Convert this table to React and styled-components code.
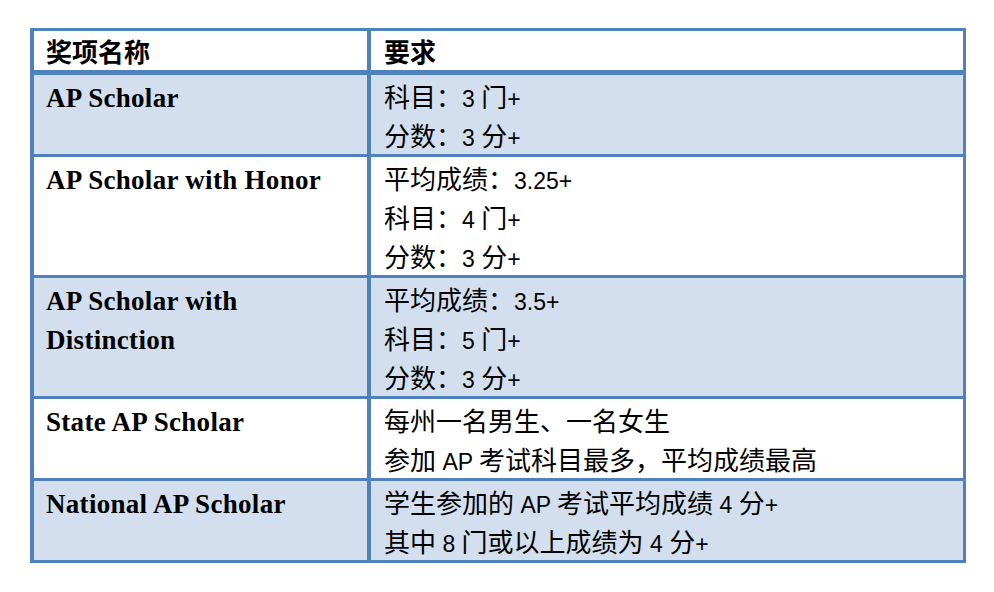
import React from 'react';
import styled, { createGlobalStyle } from 'styled-components';

const BORDER = '#4f81bd';
const SHADE = '#d3dfee';

const GlobalStyle = createGlobalStyle`
  html, body { margin: 0; padding: 0; background: #ffffff; }
  body { font-family: "Noto Sans CJK SC", sans-serif; color: #000; }
`;

const Page = styled.div`
  padding: 28px 0 0 30px;
`;

const Table = styled.table`
  width: 936px;
  table-layout: fixed;
  border-collapse: separate;
  border-spacing: 0;
  border-top: 3px solid ${BORDER};
  border-left: 4px solid ${BORDER};
`;

const Row = styled.tr`
  background: ${p => (p.$shaded ? SHADE : '#ffffff')};
`;

const HeadCell = styled.th`
  box-sizing: border-box;
  width: ${p => (p.$col === 0 ? 337 : 595)}px;
  padding: 0 12px 0 ${p => (p.$col === 0 ? 12 : 13)}px;
  border-right: ${p => (p.$col === 0 ? 4 : 3)}px solid ${BORDER};
  border-bottom: 5px solid ${BORDER};
  text-align: left;
  vertical-align: top;
  font-family: "Noto Sans CJK SC", sans-serif;
  font-size: 26px;
  font-weight: 700;
  line-height: 39px;
`;

const Cell = styled.td`
  box-sizing: border-box;
  padding: 1px 12px 0 ${p => (p.$col === 0 ? 12 : 13)}px;
  border-right: ${p => (p.$col === 0 ? 4 : 3)}px solid ${BORDER};
  border-bottom: 3px solid ${BORDER};
  vertical-align: top;
  line-height: 39px;
`;

const AwardName = styled.div`
  padding-top: 3px;
  font-family: "Liberation Serif", "Times New Roman", serif;
  font-weight: 700;
  font-size: 27px;
  letter-spacing: 0.3px;
  line-height: 39px;
`;

const Line = styled.div`
  font-family: "Noto Sans CJK SC", sans-serif;
  font-size: 26px;
  font-weight: 400;
  line-height: 39px;
  white-space: nowrap;
`;

const Latin = styled.span`
  font-family: "Liberation Sans", Arial, sans-serif;
  font-size: 23px;
  line-height: 1;
`;

const renderRuns = text =>
  text
    .split(/([\x20-\x7e]+)/)
    .filter(Boolean)
    .map((seg, i) =>
      /^[\x20-\x7e]+$/.test(seg) ? (
        <Latin key={i}>{seg}</Latin>
      ) : (
        <React.Fragment key={i}>{seg}</React.Fragment>
      )
    );

const rows = [
  { name: 'AP Scholar', lines: ['科目：3 门+', '分数：3 分+'] },
  { name: 'AP Scholar with Honor', lines: ['平均成绩：3.25+', '科目：4 门+', '分数：3 分+'] },
  { name: 'AP Scholar with Distinction', lines: ['平均成绩：3.5+', '科目：5 门+', '分数：3 分+'] },
  { name: 'State AP Scholar', lines: ['每州一名男生、一名女生', '参加 AP 考试科目最多，平均成绩最高'] },
  { name: 'National AP Scholar', lines: ['学生参加的 AP 考试平均成绩 4 分+', '其中 8 门或以上成绩为 4 分+'] },
];

export default function App() {
  return (
    <>
      <GlobalStyle />
      <Page>
        <Table>
          <thead>
            <Row>
              <HeadCell $col={0}>奖项名称</HeadCell>
              <HeadCell $col={1}>要求</HeadCell>
            </Row>
          </thead>
          <tbody>
            {rows.map((r, i) => (
              <Row key={r.name} $shaded={i % 2 === 0}>
                <Cell $col={0}>
                  <AwardName>{r.name}</AwardName>
                </Cell>
                <Cell $col={1}>
                  {r.lines.map(l => (
                    <Line key={l}>{renderRuns(l)}</Line>
                  ))}
                </Cell>
              </Row>
            ))}
          </tbody>
        </Table>
      </Page>
    </>
  );
}
